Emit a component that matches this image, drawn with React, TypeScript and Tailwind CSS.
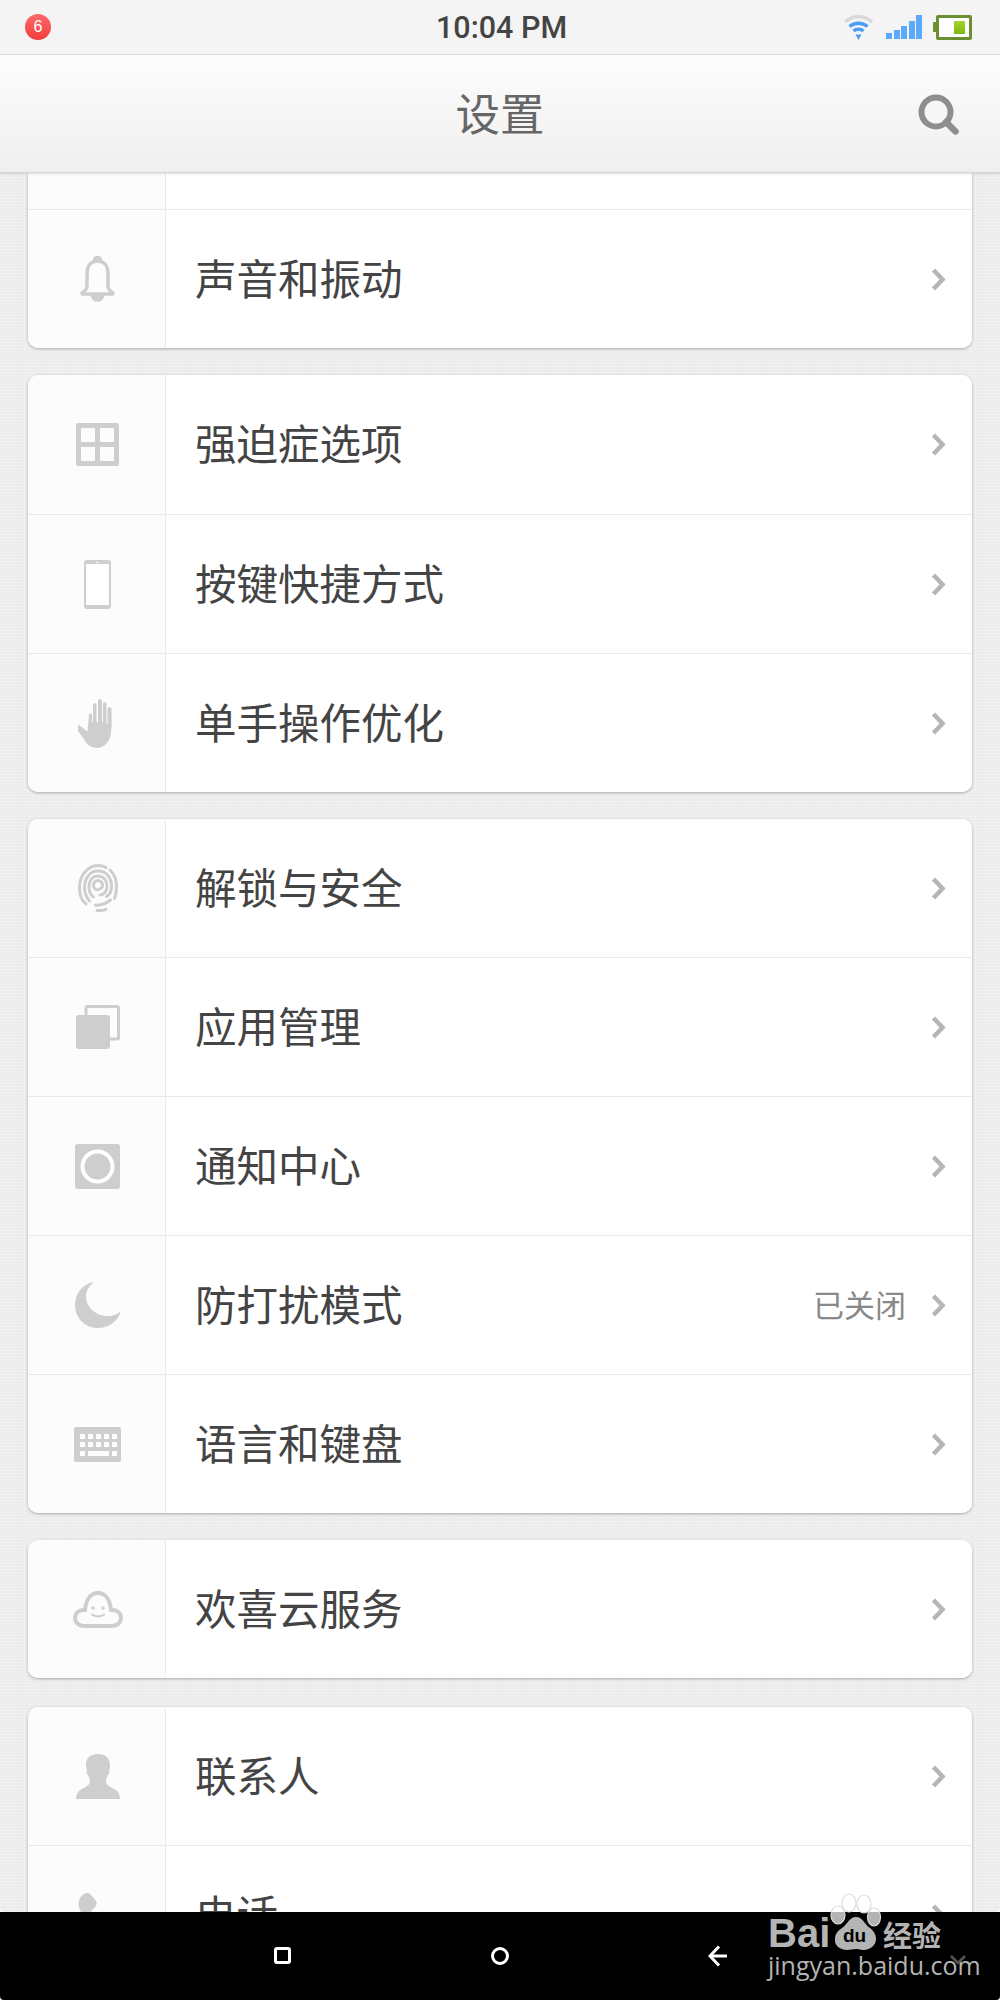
import type { ReactNode } from 'react';

const CJK = 'font-["Noto_Sans_CJK_SC","Noto_Sans",sans-serif]';

const GridIcon = () => (
  <svg width="43" height="43" viewBox="0 0 43 43" fill="#cecece">
    <path fillRule="evenodd" d="M2 0h39a2 2 0 0 1 2 2v39a2 2 0 0 1-2 2H2a2 2 0 0 1-2-2V2a2 2 0 0 1 2-2zM5 5v14h14V5zm19 0v14h14V5zM5 24v14h14V24zm19 0v14h14V24z" />
  </svg>
);

const BellIcon = () => (
  <svg width="37" height="46" viewBox="0 0 37 46" fill="none" stroke="#cecece" strokeWidth="3.5" strokeLinejoin="round">
    <path d="M18.5 5C11 5 8 11 8 18v12c0 3-2 5-5 7v1h31v-1c-3-2-5-4-5-7V18c0-7-3-13-10.500-13z" />
    <path d="M15.500 5c0-2 1-3.500 3-3.500s3 1.500 3 3.500" />
    <path d="M13 39c1 3.500 3 5 5.500 5s4.500-1.500 5.500-5z" fill="#cecece" />
  </svg>
);

const PhoneIcon = () => (
  <svg width="27" height="49" viewBox="0 0 27 49">
    <rect x="1" y="1" width="25" height="47" rx="2" fill="#fff" stroke="#cecece" strokeWidth="2" />
    <rect x="1" y="1" width="25" height="3" fill="#cecece" />
    <rect x="1" y="45" width="25" height="3" fill="#cecece" />
    <circle cx="13.500" cy="2.500" r="1" fill="#fff" />
  </svg>
);

const HandIcon = () => (
  <svg width="39" height="49" viewBox="0 0 39 49" fill="#cecece">
    <path d="M11 16c0-2 3-2 3 0v7h1V6c0-2.500 3.500-2.500 3.500 0v17h1.500V2c0-2.500 4-2.500 4 0v21h1V5c0-2.500 3.500-2.500 3.500 0v20h1V10c0-2.500 4-2.500 4 0 0 9 .5 17-.5 24-1 8-6 15-14 15-7 0-11-5-14-10-2-3-4-6-8-10-2-2 0-4.500 2.500-3.500 3 1 6 4 10 7z" />
  </svg>
);

const FingerprintIcon = () => (
  <svg width="40" height="48" viewBox="0 0 40 48" fill="none" stroke="#cecece" strokeWidth="3" strokeLinecap="round">
    <path d="M8 40C3 36 1.500 30 1.500 24 1.500 12 9 2 20 1.500c3 0 5.500 .5 8 2" />
    <path d="M32 6c4.500 4 6.500 10 6.500 17 0 5-1 9-2 11.500" />
    <path d="M11.500 37C8 33 6.500 29 6.500 24 6.500 14 12 7 20 7c9 0 13.500 7.500 13.500 15.500 0 5-1.500 8-5 10" />
    <path d="M15.500 33c-3-2-4.500-6-4.500-10 0-7 4-11 9-11 6 0 9 5 9 10.500 0 5-3 8-7 8.500" />
    <path d="M20 26c-2.500 0-4.500-2-4.500-4.500 0-3 2-5 4.500-5 2.500 0 4.500 2 4.500 5 0 1.500-1 3-2.500 3" />
    <path d="M17.500 41c4 .5 10-1 15-5" />
    <path d="M19 46.500c3 .3 6 0 9-1.200" />
  </svg>
);

const CopyIcon = () => (
  <svg width="44" height="44" viewBox="0 0 44 44">
    <rect x="10" y="1.500" width="32.500" height="32.500" rx="1.500" fill="none" stroke="#cecece" strokeWidth="3" />
    <rect x="0" y="10" width="34" height="34" rx="3" fill="#cecece" />
  </svg>
);

const NotifyIcon = () => (
  <svg width="45" height="45" viewBox="0 0 45 45">
    <rect width="45" height="45" rx="3" fill="#cecece" />
    <circle cx="22.500" cy="22.500" r="15" fill="none" stroke="#fff" strokeWidth="4" />
  </svg>
);

const MoonIcon = () => (
  <svg width="46" height="46" viewBox="0 0 46 46" fill="#cecece">
    <path d="M19 0C7 2 0 12 0 23c0 13 10 23 23 23 11 0 20-7 23-17-3 3-8 5-14 5C21 34 11 25 11 14c0-5 3-10 8-14z" />
  </svg>
);

const KeyboardIcon = () => (
  <svg width="47" height="35" viewBox="0 0 47 35">
    <rect width="47" height="35" rx="2" fill="#cecece" />
    {[0, 1].map((row) =>
      [0, 1, 2, 3, 4].map((col) => (
        <rect key={`${row}-${col}`} x={6 + col * 8} y={7 + row * 8} width="5" height="5" fill="#fff" />
      )),
    )}
    <rect x="6" y="24" width="5" height="5" fill="#fff" />
    <rect x="14" y="24" width="21" height="5" fill="#fff" />
    <rect x="38" y="24" width="5" height="5" fill="#fff" />
  </svg>
);

const CloudIcon = () => (
  <svg width="50" height="37" viewBox="0 0 50 37" fill="none" stroke="#cecece" strokeWidth="4">
    <path d="M11 35h28c5.500 0 9-4 9-8 0-5-4-8-8-8h-2C37 8 32 2 25 2S13 8 12 19h-2c-4 0-8 3-8 8 0 4 3.500 8 9 8z" />
    <circle cx="20" cy="17" r="1.800" fill="#cecece" stroke="none" />
    <circle cx="30" cy="17" r="1.800" fill="#cecece" stroke="none" />
    <path d="M19 23.500c3 2.500 9 2.500 12 0" strokeWidth="2" strokeLinecap="round" />
  </svg>
);

const PersonIcon = () => (
  <svg width="44" height="45" viewBox="0 0 44 45" fill="#cecece">
    <path d="M22 0c6 0 12 3 12 11 0 2 0 4-1 5 1 2 0 4-1 5-1 2-2 4-2 7 0 4 8 6 11 9 2 2 3 5 3 8H0c0-3 1-6 3-8 3-3 11-5 11-9 0-3-1-5-2-7-1-1-2-3-1-5-1-2-1-4-1-6C10 4 15 0 22 0z" />
  </svg>
);

const HandsetIcon = () => (
  <svg width="44" height="44" viewBox="0 0 44 44" fill="#cecece">
    <path d="M8 1c3-2 6-1 8 2l4 5c1 2 1 4-1 6l-3 3c-1 1-1 2 0 4 2 4 4 7 7 10 2 1 3 1 4 0l3-3c2-2 4-2 6 0l5 5c2 2 2 5 0 7-4 4-9 4-15 1C17 36 8 26 4 17 1 10 3 4 8 1z" />
  </svg>
);

const Chevron = () => (
  <svg width="15" height="23" viewBox="0 0 15 23" fill="none" stroke="#b5b5b5" strokeWidth="4.500">
    <path d="M2.500 2l9 9.500-9 9.500" />
  </svg>
);

interface RowProps {
  icon?: ReactNode;
  label?: string;
  value?: string;
  className?: string;
}

const Row = ({ icon, label, value, className = 'h-[139px]' }: RowProps) => (
  <div className={`flex border-t border-[#e9e9e9] first:border-t-0 ${className}`}>
    <div className="w-[138px] shrink-0 flex items-center justify-center pl-[2px] bg-[#fcfcfc] border-r border-[#ebebeb]">
      {icon}
    </div>
    {label && (
      <div className="flex-1 flex items-center pl-[29px] pr-[26px] bg-white">
        <span className={`flex-1 pb-[3px] text-[41.500px] leading-none text-[#444444] ${CJK}`}>{label}</span>
        {value && <span className={`mr-[25px] pb-[3px] text-[31px] leading-none text-[#888888] ${CJK}`}>{value}</span>}
        <Chevron />
      </div>
    )}
    {!label && <div className="flex-1 bg-white" />}
  </div>
);

const Card = ({ children, className = '' }: { children: ReactNode; className?: string }) => (
  <div className={`rounded-[10px] overflow-hidden bg-white shadow-[0_1px_3px_rgba(0,0,0,0.3)] ${className}`}>
    {children}
  </div>
);

const StatusBar = () => (
  <div className="h-[55px] shrink-0 flex items-center justify-between pl-[25px] pr-[28px] bg-[#f4f4f4] border-b border-[#dcdcdc] relative">
    <div className="w-[26px] h-[26px] rounded-full bg-gradient-to-b from-[#fb6a6a] to-[#f23a3a] flex items-center justify-center text-white text-[16px] leading-none font-['Liberation_Sans',sans-serif]">
      6
    </div>
    <span className="absolute left-[436px] top-[11px] text-[30.500px] leading-[34px] font-medium text-[#444444] font-['Roboto',sans-serif]">
      10:04 PM
    </span>
    <div className="flex items-center">
      <svg width="31" height="26" viewBox="0 0 31 26" fill="none" strokeLinecap="butt">
        <path d="M2 8C10 .5 21 .5 29 8" stroke="#d9d9d9" strokeWidth="3.500" />
        <path d="M6.500 12.500c5-4.500 13-4.500 18 0" stroke="#4a9dfb" strokeWidth="3.500" />
        <path d="M10.500 17c3-2.500 7-2.500 10 0" stroke="#4a9dfb" strokeWidth="3.500" />
        <path d="M12.500 20.500h6l-3 5.500z" fill="#4a9dfb" />
      </svg>
      <div className="ml-[12px] h-[24px] flex items-end gap-[1.500px]">
        <div className="w-[6px] h-[6px] bg-[#5aa9fb]" />
        <div className="w-[6px] h-[9px] bg-[#5aa9fb]" />
        <div className="w-[6px] h-[13px] bg-[#5aa9fb]" />
        <div className="w-[6px] h-[18px] bg-[#5aa9fb]" />
        <div className="w-[6px] h-[24px] bg-[#5aa9fb]" />
      </div>
      <div className="ml-[11px] flex items-center">
        <div className="w-[3px] h-[10px] bg-[#6b8e30] rounded-l-[1px]" />
        <div className="w-[36px] h-[25px] border-[3px] border-[#6b8e30] rounded-[2px] bg-white flex justify-end items-center pr-[4px]">
          <div className="w-[11px] h-[13px] bg-gradient-to-b from-[#a4d22a] to-[#7fb80f]" />
        </div>
      </div>
    </div>
  </div>
);

const Header = () => (
  <div className="h-[118px] shrink-0 relative z-10 flex items-center justify-center pb-[3px] bg-gradient-to-b from-[#fdfdfd] to-[#efefef] border-b border-[#d4d4d4] shadow-[0_1px_2px_rgba(0,0,0,0.12)]">
    <span className={`text-[44.500px] leading-none text-[#666666] ${CJK}`}>设置</span>
    <svg className="absolute right-[41px] top-[39px]" width="41" height="41" viewBox="0 0 41 41" fill="none" stroke="#8e8e8e">
      <circle cx="18" cy="18" r="14.500" strokeWidth="6" />
      <path d="M28 28l9.500 9.500" strokeWidth="6.500" strokeLinecap="round" />
    </svg>
  </div>
);

const Watermark = () => (
  <div className="absolute left-[768px] top-[1893px] w-[200px] h-[90px]">
    <span className="absolute left-0 top-[25px] text-[40px] leading-[30px] font-bold text-[#b4b4b4] font-['Liberation_Sans',sans-serif]">
      Bai
    </span>
    <svg className="absolute left-[60px] top-0" width="56" height="60" viewBox="0 0 56 60">
      <g fill="#ffffff" fillOpacity="0.7" stroke="#dddddd" strokeWidth="1.200">
        <ellipse cx="10" cy="22" rx="7" ry="9" />
        <ellipse cx="21" cy="10" rx="7" ry="9" />
        <ellipse cx="36" cy="11" rx="7" ry="9" />
        <ellipse cx="46" cy="24" rx="6.500" ry="9" />
      </g>
      <path d="M28 24c7 0 8 7 14 11 5 4 6 8 6 11 0 7-7 11-12 11-4 0-5-1-8-1s-5 1-9 1C13 57 6 53 7 46c0-4 2-8 7-11 6-4 7-11 14-11z" fill="#b4b4b4" />
      <text x="15" y="49" fontSize="19" fontFamily="'Liberation Sans',sans-serif" fontWeight="700" fill="#000000">du</text>
    </svg>
    <span className={`absolute left-[115px] top-[27px] text-[29px] leading-[28px] font-bold text-[#b4b4b4] ${CJK}`}>
      经验
    </span>
    <span className="absolute left-0 top-[59px] text-[25px] leading-[26px] text-[#b4b4b4] font-['Open_Sans',sans-serif]">
      jingyan.baidu.com
    </span>
    <svg className="absolute left-[182px] top-[62px]" width="16" height="10" viewBox="0 0 16 10" fill="none" stroke="#555555" strokeWidth="2.500">
      <path d="M1 1l7 7 7-7" />
    </svg>
  </div>
);

const NavBar = () => (
  <div className="h-[88px] shrink-0 bg-black rounded-b-[4px] flex items-center justify-between pl-[274px] pr-[273px] pb-[1px]">
    <div className="w-[17px] h-[17px] border-[3px] border-white rounded-[3px]" />
    <div className="w-[18px] h-[18px] border-[3px] border-white rounded-full" />
    <svg width="19" height="22" viewBox="0 0 19 22" fill="none" stroke="#ffffff" strokeWidth="3">
      <path d="M11 1.500L2 11l9 9.500" />
      <path d="M2 11h17" />
    </svg>
  </div>
);

const App = () => {
  return (
    <div className="relative w-[1000px] h-[2000px] flex flex-col overflow-hidden bg-white">
      <StatusBar />
      <Header />
      <div className="flex-1 min-h-0 overflow-hidden rounded-b-[4px] px-[28px] pb-[20px] bg-[#ebebeb] bg-[repeating-linear-gradient(90deg,rgba(255,255,255,0.2)_0_1px,transparent_1px_3px),repeating-linear-gradient(0deg,rgba(255,255,255,0.2)_0_1px,transparent_1px_3px)]">
        <Card className="rounded-t-none">
          <Row className="h-[36px]" />
          <Row icon={<BellIcon />} label="声音和振动" />
        </Card>
        <Card className="mt-[27px]">
          <Row icon={<GridIcon />} label="强迫症选项" />
          <Row icon={<PhoneIcon />} label="按键快捷方式" />
          <Row icon={<HandIcon />} label="单手操作优化" />
        </Card>
        <Card className="mt-[27px]">
          <Row className="h-[138px]" icon={<FingerprintIcon />} label="解锁与安全" />
          <Row icon={<CopyIcon />} label="应用管理" />
          <Row icon={<NotifyIcon />} label="通知中心" />
          <Row icon={<MoonIcon />} label="防打扰模式" value="已关闭" />
          <Row icon={<KeyboardIcon />} label="语言和键盘" />
        </Card>
        <Card className="mt-[27px]">
          <Row className="h-[138px]" icon={<CloudIcon />} label="欢喜云服务" />
        </Card>
        <Card className="mt-[29px]">
          <Row className="h-[138px]" icon={<PersonIcon />} label="联系人" />
          <Row icon={<HandsetIcon />} label="电话" />
        </Card>
      </div>
      <NavBar />
      <Watermark />
    </div>
  );
};

export default App;
